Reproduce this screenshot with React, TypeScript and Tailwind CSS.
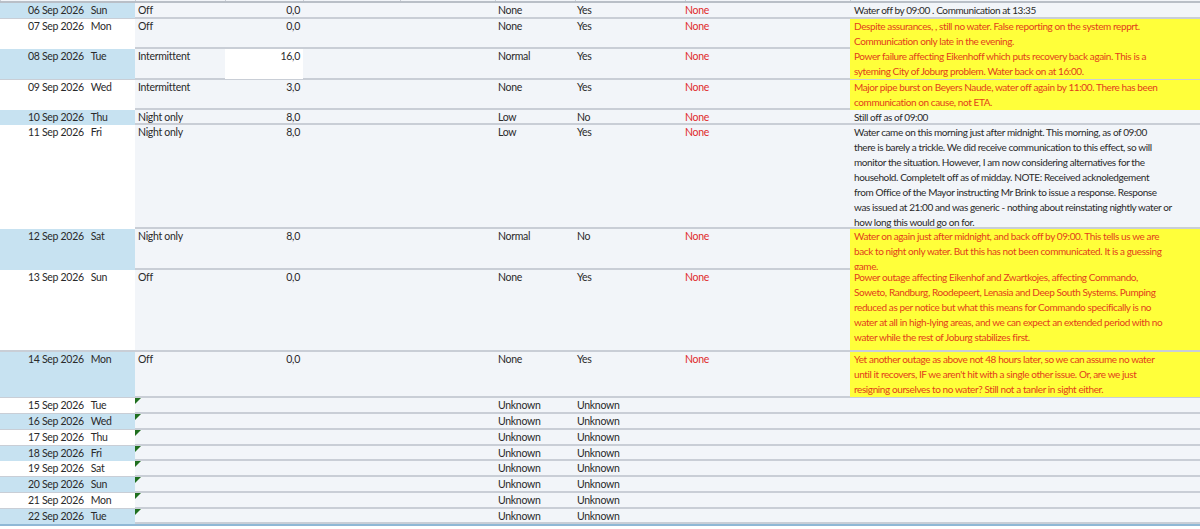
import React from "react";

type Row = {
  date: string; day: string; status?: string; hours?: string; a?: string; b?: string; c?: string;
  notes?: string[]; hl?: boolean; h: number; blue: boolean; whiteHours?: boolean; tri?: boolean;
};

const rows: Row[] = [
  { date: "06 Sep 2026", day: "Sun", status: "Off", hours: "0,0", a: "None", b: "Yes", c: "None", notes: ["Water off by 09:00 . Communication at 13:35"], h: 16, blue: true },
  { date: "07 Sep 2026", day: "Mon", status: "Off", hours: "0,0", a: "None", b: "Yes", c: "None", notes: ["Despite assurances, , still no water. False reporting on the system repprt.", "Communication only late in the evening."], hl: true, h: 30, blue: false },
  { date: "08 Sep 2026", day: "Tue", status: "Intermittent", hours: "16,0", a: "Normal", b: "Yes", c: "None", notes: ["Power failure affecting Eikenhoff which puts recovery back again. This is a", "syteming City of Joburg problem. Water back on at 16:00."], hl: true, h: 31, blue: true, whiteHours: true },
  { date: "09 Sep 2026", day: "Wed", status: "Intermittent", hours: "3,0", a: "None", b: "Yes", c: "None", notes: ["Major pipe burst on Beyers Naude, water off again by 11:00. There has been", "communication on cause, not ETA."], hl: true, h: 30, blue: false },
  { date: "10 Sep 2026", day: "Thu", status: "Night only", hours: "8,0", a: "Low", b: "No", c: "None", notes: ["Still off as of 09:00"], h: 15, blue: true },
  { date: "11 Sep 2026", day: "Fri", status: "Night only", hours: "8,0", a: "Low", b: "Yes", c: "None", notes: [
    "Water came on this morning just after midnight. This morning, as of 09:00",
    "there is barely a trickle. We did receive communication to this effect, so will",
    "monitor the situation. However, I am now considering alternatives for the",
    "household. Completelt off as of midday.  NOTE: Received acknoledgement",
    "from Office of the Mayor instructing Mr Brink to issue a response. Response",
    "was issued at 21:00 and was generic - nothing about reinstating nightly water or",
    "how long this would go on for."], h: 104, blue: false },
  { date: "12 Sep 2026", day: "Sat", status: "Night only", hours: "8,0", a: "Normal", b: "No", c: "None", notes: [
    "Water on again just after midnight, and back off by 09:00. This tells us we are",
    "back to night only water. But this has not been communicated. It is a guessing",
    "game."], hl: true, h: 41, blue: true },
  { date: "13 Sep 2026", day: "Sun", status: "Off", hours: "0,0", a: "None", b: "Yes", c: "None", notes: [
    "Power outage affecting Eikenhof and Zwartkojes, affecting Commando,",
    "Soweto, Randburg, Roodepeert, Lenasia and Deep South Systems. Pumping",
    "reduced as per notice but what this means for Commando specifically is no",
    "water at all in high-lying areas, and we can expect an extended period with no",
    "water while the rest of Joburg stabilizes first."], hl: true, h: 82, blue: false },
  { date: "14 Sep 2026", day: "Mon", status: "Off", hours: "0,0", a: "None", b: "Yes", c: "None", notes: [
    "Yet another outage as above not 48 hours later, so we can assume no water",
    "until it recovers, IF we aren't hit with a single other issue. Or, are we just",
    "resigning ourselves to no water? Still not a tanler in sight either."], hl: true, h: 46, blue: true },
  ...[
    ["15 Sep 2026", "Tue"], ["16 Sep 2026", "Wed"], ["17 Sep 2026", "Thu"], ["18 Sep 2026", "Fri"],
    ["19 Sep 2026", "Sat"], ["20 Sep 2026", "Sun"], ["21 Sep 2026", "Mon"], ["22 Sep 2026", "Tue"],
  ].map(([d, w], i) => ({ date: d, day: w, a: "Unknown", b: "Unknown", h: i % 2 === 0 ? 16 : 15.5, blue: i % 2 === 1, tri: true } as Row)),
];

const grid = "grid grid-cols-[135px_90px_78px_97px_95px_80px_110px_165px_1fr]";

export default function App() {
  return (
    <div className="w-[1200px] h-[529px] overflow-hidden bg-white text-[10.5px] tracking-[-0.3px] leading-[15px] text-[#2a2a2a]" style={{ fontFamily: "Lato, 'Noto Sans', sans-serif" }}>
      <div className={`${grid} h-[3px] bg-[#f2f5f9] border-b-2 border-[#b9bfc7]`}>
        {Array.from({ length: 9 }).map((_, i) => <div key={i} className="border-l border-[#c9ced6]" />)}
      </div>
      {rows.map((r, i) => (
        <div key={i} className={`${grid} bg-[#f2f5f9] border-b-2 border-[#c9ced6] box-border`} style={{ height: r.h }}>
          <div className={`${r.blue ? "bg-[#c7e2f1]" : "bg-white"} flex pl-[28px] gap-[7px]`}>
            <span>{r.date}</span><span>{r.day}</span>
          </div>
          <div className="relative pl-[3px]">
            {r.tri && <div className="absolute left-0 top-0 w-0 h-0 border-t-[6px] border-t-[#1f6f1f] border-r-[6px] border-r-transparent" />}
            {r.status}
          </div>
          <div className={`${r.whiteHours ? "bg-white" : ""} text-right pr-[3px]`}>{r.hours}</div>
          <div />
          <div />
          <div className="pl-[3px]">{r.a}</div>
          <div className="pl-[2px]">{r.b}</div>
          <div className="pl-[0px] text-[#e02b2b]">{r.c}</div>
          <div className={`${r.hl ? "bg-[#ffff3a] text-[#e2401c]" : ""} pl-[4px] whitespace-nowrap text-[10px] tracking-[-0.4px]`}>
            {r.notes?.map((n, j) => <div key={j}>{n}</div>)}
          </div>
        </div>
      ))}
      <div className="h-[2px] bg-[#8fb8d6]" />
    </div>
  );
}
